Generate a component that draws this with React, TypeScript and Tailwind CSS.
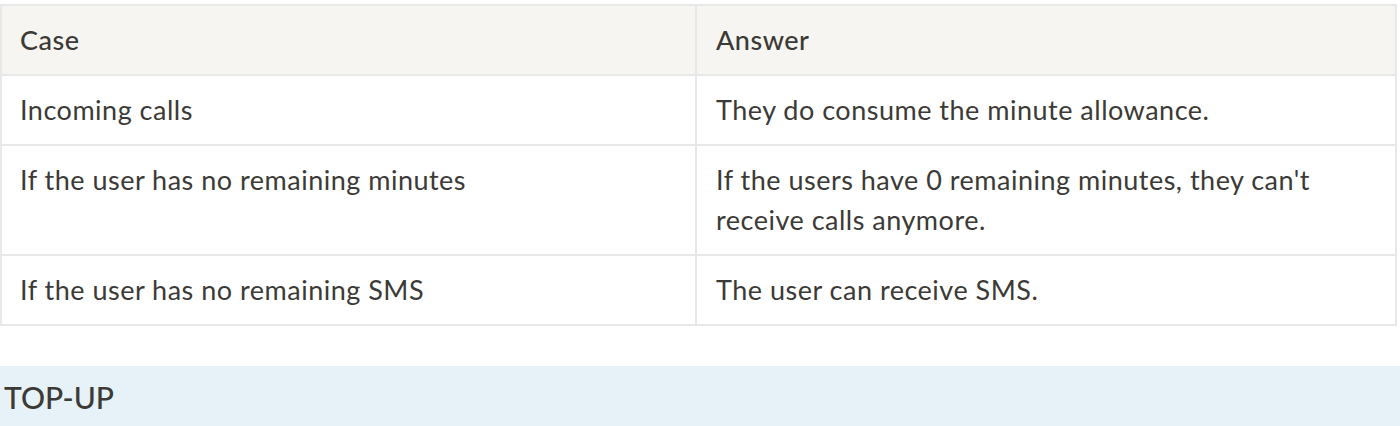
const rows = [
  { q: 'Incoming calls', a: 'They do consume the minute allowance.' },
  {
    q: 'If the user has no remaining minutes',
    a: "If the users have 0 remaining minutes, they can't receive calls anymore.",
  },
  { q: 'If the user has no remaining SMS', a: 'The user can receive SMS.' },
];

export default function App() {
  return (
    <div className="min-h-[426px] bg-white pt-1 text-[#3b3a36] font-['Lato',sans-serif]">
      <div className="w-[1397px] border-2 border-[#e8e8e8]">
        <div className="grid grid-cols-[695px_1fr] bg-[#f6f5f2] text-[27px] leading-[40px] tracking-[0.5px] font-medium">
          <div className="border-r-2 border-[#e8e8e8] px-[18px] py-[14px]">Case</div>
          <div className="px-[19px] py-[14px]">Answer</div>
        </div>
        {rows.map((row) => (
          <div
            key={row.q}
            className="grid grid-cols-[695px_1fr] border-t-2 border-[#e8e8e8] text-[27px] leading-[40px] tracking-[0.5px]"
          >
            <div className="border-r-2 border-[#e8e8e8] px-[18px] py-[14px]">{row.q}</div>
            <div className="px-[19px] py-[14px]">{row.a}</div>
          </div>
        ))}
      </div>

      {/* Next section */}
      <div className="mt-[40px] bg-[#e6f1f8] px-1 pt-[11px] pb-[14px] text-[30px] leading-[40px] font-medium">
        TOP-UP
      </div>
    </div>
  );
}
